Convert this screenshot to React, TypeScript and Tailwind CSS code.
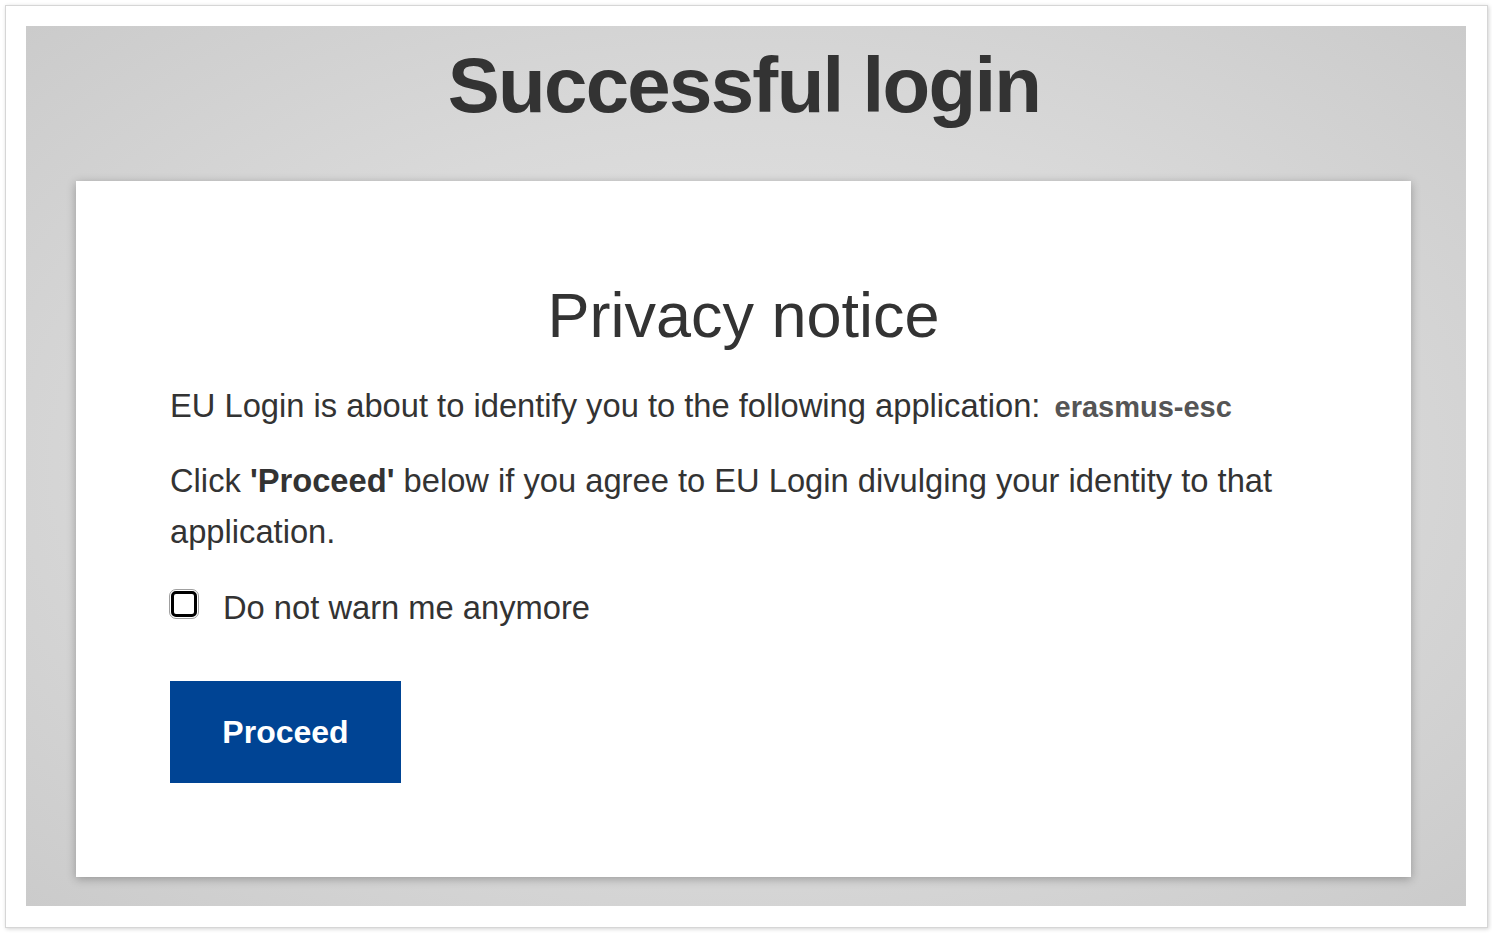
import React, { useState } from 'react';

export default function App() {
  const [dontWarn, setDontWarn] = useState(false);

  return (
    <div className="w-[1492px] h-[933px] bg-white pt-[5px] pl-[5px] font-['Liberation_Sans',Arial,sans-serif]">
      <div className="w-[1483px] h-[923px] bg-white border border-[#d6d6d6] shadow-[1px_1px_4px_rgba(0,0,0,0.18)] p-[20px]">
        <div className="w-[1440px] h-[880px] bg-[radial-gradient(ellipse_at_center,#e6e6e6_0%,#d9d9d9_55%,#cbcbcb_100%)] pt-[20px] flex flex-col">
          <h1 className="text-center text-[78px] leading-none font-bold tracking-[-1.7px] text-[#333333] pr-[4px]">
            Successful login
          </h1>

          <div className="mt-[57px] ml-[50px] w-[1335px] h-[696px] bg-white shadow-[0_2px_9px_rgba(0,0,0,0.28)] pt-[103px] px-[94px] pb-[94px] text-[#333333]">
            <h2 className="text-center text-[63px] leading-none font-normal">Privacy notice</h2>

            <p className="mt-[33px] text-[32.7px] leading-[51px]">
              EU Login is about to identify you to the following application:{' '}
              <span className="ml-[5px] font-bold text-[29px] text-[#555555]">erasmus-esc</span>
            </p>

            <p className="mt-[22px] text-[32.7px] leading-[51px]">
              Click <strong>'Proceed'</strong> below if you agree to EU Login divulging your identity to that application.
            </p>

            <label
              className="mt-[25px] flex items-center text-[32.7px] leading-[51px] cursor-pointer select-none"
              onClick={() => setDontWarn(!dontWarn)}
            >
              <span className="w-[30px] h-[30px] -ml-[1px] mt-[-7px] rounded-[7px] border border-[#a0a0a0] p-[1px] flex">
                <span className="flex-1 rounded-[5px] border-[3px] border-black bg-white flex items-center justify-center">
                  {dontWarn && <span className="w-[10px] h-[10px] bg-black" />}
                </span>
              </span>
              <span className="ml-[24px]">Do not warn me anymore</span>
            </label>

            <button className="mt-[48px] h-[102px] w-[231px] bg-[#004494] text-white text-[32px] font-bold">
              Proceed
            </button>
          </div>
        </div>
      </div>
    </div>
  );
}
